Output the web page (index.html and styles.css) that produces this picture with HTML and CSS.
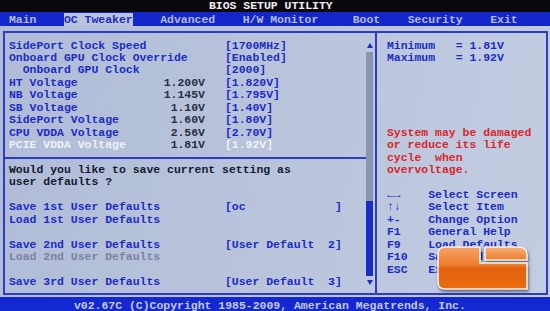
FILE: index.html
```html
<!DOCTYPE html>
<html lang="en">
<head>
    <meta charset="UTF-8">
    <meta name="viewport" content="width=device-width, initial-scale=1.0">
    <title>BIOS Setup Utility</title>
    <link rel="stylesheet" href="styles.css">
</head>
<body>
    <div class="screen">
        <div class="title">BIOS SETUP UTILITY</div>
        <div class="menu"><span>Main</span>    <span class="active">OC Tweaker</span>    <span>Advanced</span>    <span>H/W Monitor</span>     <span>Boot</span>    <span>Security</span>    <span>Exit</span></div>

        <div class="frame">
            <div class="box">
                <div class="left">
                    <div class="content">
                        <div class="setting"><div class="label"><span>SidePort Clock Speed</span></div><span>[1700MHz]</span></div>
                        <div class="setting"><div class="label"><span>Onboard GPU Clock Override</span></div><span>[Enabled]</span></div>
                        <div class="setting"><div class="label sub"><span>Onboard GPU Clock</span></div><span>[2000]</span></div>
                        <div class="setting"><div class="label"><span>HT Voltage</span><span class="now">1.200V</span></div><span>[1.820V]</span></div>
                        <div class="setting"><div class="label"><span>NB Voltage</span><span class="now">1.145V</span></div><span>[1.795V]</span></div>
                        <div class="setting"><div class="label"><span>SB Voltage</span><span class="now">1.10V</span></div><span>[1.40V]</span></div>
                        <div class="setting"><div class="label"><span>SidePort Voltage</span><span class="now">1.60V</span></div><span>[1.80V]</span></div>
                        <div class="setting"><div class="label"><span>CPU VDDA Voltage</span><span class="now">2.56V</span></div><span>[2.70V]</span></div>
                        <div class="setting selected"><div class="label"><span>PCIE VDDA Voltage</span><span class="now">1.81V</span></div><span>[1.92V]</span></div>

                        <div class="rule"></div>

                        <div class="question">Would you like to save current setting as</div>
                        <div class="question">user defaults ?</div>

                        <div class="group">
                            <div class="setting"><div class="label"><span>Save 1st User Defaults</span></div><span>[oc             ]</span></div>
                            <div class="setting"><div class="label"><span>Load 1st User Defaults</span></div></div>
                        </div>
                        <div class="group">
                            <div class="setting"><div class="label"><span>Save 2nd User Defaults</span></div><span>[User Default  2]</span></div>
                            <div class="setting disabled"><div class="label"><span>Load 2nd User Defaults</span></div></div>
                        </div>
                        <div class="group">
                            <div class="setting"><div class="label"><span>Save 3rd User Defaults</span></div><span>[User Default  3]</span></div>
                        </div>
                    </div>

                    <div class="scrollbar">
                        <div class="arrow"><i class="up"></i></div>
                        <div class="track"><div class="thumb"></div></div>
                        <div class="arrow"><i class="down"></i></div>
                    </div>
                </div>

                <div class="help">
                    <div class="limit"><span>Minimum</span><span>= 1.81V</span></div>
                    <div class="limit"><span>Maximum</span><span>= 1.92V</span></div>

                    <div class="warning">
                        <div>System may be damaged</div>
                        <div>or reduce its life</div>
                        <div>cycle  when</div>
                        <div>overvoltage.</div>
                    </div>

                    <div class="keys">
                        <div class="key"><span>←→</span><span>Select Screen</span></div>
                        <div class="key"><span>↑↓</span><span>Select Item</span></div>
                        <div class="key"><span>+-</span><span>Change Option</span></div>
                        <div class="key"><span>F1</span><span>General Help</span></div>
                        <div class="key"><span>F9</span><span>Load Defaults</span></div>
                        <div class="key"><span>F10</span><span>Save and Exit</span></div>
                        <div class="key"><span>ESC</span><span>Exit</span></div>
                    </div>
                </div>
            </div>
        </div>

        <div class="footer">v02.67C (C)Copyright 1985-2009, American Megatrends, Inc.</div>

        <!-- site watermark over the photo -->
        <svg class="logo" width="94" height="48" viewBox="0 0 94 48">
            <defs>
                <linearGradient id="orange" x1="0" y1="0" x2="0" y2="1">
                    <stop offset="0" stop-color="#f6a468"/>
                    <stop offset="0.42" stop-color="#ee7e30"/>
                    <stop offset="0.5" stop-color="#e2620e"/>
                    <stop offset="1" stop-color="#ea6c12"/>
                </linearGradient>
                <linearGradient id="orange2" x1="0" y1="0" x2="0" y2="1">
                    <stop offset="0" stop-color="#f7b07a"/>
                    <stop offset="1" stop-color="#ee7c2a"/>
                </linearGradient>
            </defs>
            <path d="M2,8 Q2,1 9,1 L44,1 L44,17 L91,17 L91,43 L9,43 Q2,43 2,36 Z" fill="url(#orange)" stroke="#f4f2ee" stroke-width="1.6"/>
            <path d="M49,1 L83,1 Q91,1 91,9 L91,14 L49,14 Z" fill="url(#orange2)" stroke="#f4f2ee" stroke-width="1.6"/>
        </svg>
    </div>
</body>
</html>
```

FILE: styles.css
```css
body {
    margin: 0;
    background-color: #000;
}

.screen {
    position: relative;
    width: 550px;
    height: 311px;
    overflow: hidden;
    display: flex;
    flex-direction: column;
    font-family: "Liberation Mono", "DejaVu Sans Mono", monospace;
    font-weight: bold;
    font-size: 11.46px;
    line-height: 12.45px;
    white-space: nowrap;
}

.title {
    height: 12px;
    line-height: 12px;
    padding-left: 209px;
    background-color: #07070c;
    color: #f0f0f4;
}

.menu {
    height: 14px;
    line-height: 15px;
    padding-left: 9px;
    background-color: #1326cc;
    color: #b2bae4;
    white-space: pre;
}

.menu .active {
    background-color: #b8c4dc;
    color: #1b2cc6;
}

.frame {
    height: 271px;
    padding: 5px 2px 2px 3px;
    box-sizing: border-box;
    background: linear-gradient(100deg, #b0bcd6 0%, #bac5dc 55%, #c3cde2 100%);
}

.box {
    height: 100%;
    box-sizing: border-box;
    border: 2px solid #2c3cc6;
    display: flex;
}

.left {
    width: 370px;
    display: flex;
}

.content {
    flex: 1;
    padding: 6.6px 0 0 4px;
    color: #1b2cc6;
}

.setting {
    display: grid;
    grid-template-columns: 196px 1fr;
    column-gap: 20px;
    height: 12.45px;
}

.setting > span {
    white-space: pre;
}

.label {
    display: flex;
    justify-content: space-between;
}

.label.sub {
    padding-left: 2ch;
}

.now {
    color: #283042;
}

.selected > span,
.selected .label span:first-child {
    color: #eef2fa;
}

.disabled {
    color: #7a84a0;
}

.rule {
    height: 12.45px;
    margin-left: -4px;
    display: flex;
    align-items: center;
}

.rule::before {
    content: '';
    flex: 1;
    height: 2px;
    background-color: #2c3cc6;
}

.question {
    color: #141a30;
}

.group {
    margin-top: 12.45px;
}

.scrollbar {
    width: 7px;
    height: 249px;
    margin: 6.6px 2px 0 0;
    display: flex;
    flex-direction: column;
}

.arrow {
    height: 12.45px;
    display: flex;
    align-items: center;
    justify-content: center;
}

.arrow i {
    width: 0;
    height: 0;
    border-left: 3px solid transparent;
    border-right: 3px solid transparent;
}

.arrow .up {
    border-bottom: 5px solid #1b2cc6;
}

.arrow .down {
    border-top: 5px solid #1b2cc6;
}

.track {
    flex: 1;
    display: flex;
    flex-direction: column;
    justify-content: flex-end;
    background-color: #8a96ae;
}

.thumb {
    height: 75px;
    background-color: #1b2cc6;
}

.help {
    flex: 1;
    border-left: 2px solid #2c3cc6;
    padding: 6.6px 0 0 10px;
    color: #1b2cc6;
}

.limit {
    display: grid;
    grid-template-columns: 10ch 1fr;
}

.warning {
    margin-top: 62.25px;
    color: #d8262a;
}

.warning div {
    white-space: pre;
}

.keys {
    margin-top: 12.45px;
}

.key {
    display: grid;
    grid-template-columns: 6ch 1fr;
}

.footer {
    height: 14px;
    padding: 3px 0 0 74px;
    box-sizing: border-box;
    background-color: #1428d2;
    color: #c4cae8;
}

.logo {
    position: absolute;
    left: 436px;
    top: 246px;
    filter: drop-shadow(1px 2px 1.5px rgba(0, 0, 0, 0.5));
}
```
